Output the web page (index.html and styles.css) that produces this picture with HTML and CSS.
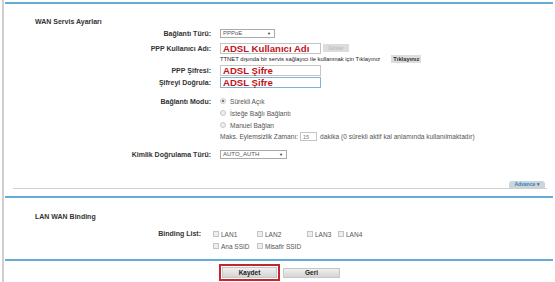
FILE: index.html
```html
<!DOCTYPE html>
<html>
<head lang="tr">
    <meta charset="UTF-8">
    <title>WAN</title>
    <link rel="stylesheet" href="styles.css">
</head>
<body>
<div class="frame">
    <div class="section wan">
        <div class="title">WAN Servis Ayarları</div>

        <div class="row">
            <div class="label">Bağlantı Türü:</div>
            <div class="value"><span class="select sel-type">PPPoE<i>&#9660;</i></span></div>
        </div>
        <div class="row r-user">
            <div class="label">PPP Kullanıcı Adı:</div>
            <div class="value">
                <span class="input big">ADSL Kullanıcı Adı</span>
                <span class="btn-off">Göster</span>
            </div>
        </div>
        <div class="row r-note">
            <div class="label"></div>
            <div class="value note">TTNET dışında bir servis sağlayıcı ile kullanmak için Tıklayınız <span class="btn-small">Tıklayınız</span></div>
        </div>
        <div class="row r-pass">
            <div class="label">PPP Şifresi:</div>
            <div class="value"><span class="input big">ADSL Şifre</span></div>
        </div>
        <div class="row r-pass">
            <div class="label">Şifreyi Doğrula:</div>
            <div class="value"><span class="input big focus">ADSL Şifre</span></div>
        </div>

        <div class="row r-mode">
            <div class="label">Bağlantı Modu:</div>
            <div class="value"><span class="radio on"></span>Sürekli Açık</div>
        </div>
        <div class="row r-mode">
            <div class="label"></div>
            <div class="value"><span class="radio"></span>İsteğe Bağlı Bağlantı</div>
        </div>
        <div class="row r-mode">
            <div class="label"></div>
            <div class="value"><span class="radio"></span>Manuel Bağlan</div>
        </div>
        <div class="row r-idle">
            <div class="label"></div>
            <div class="value">Maks. Eylemsizlik Zamanı: <span class="input tiny">15</span> dakika (0 sürekli aktif kal anlamında kullanılmaktadır)</div>
        </div>

        <div class="row r-auth">
            <div class="label">Kimlik Doğrulama Türü:</div>
            <div class="value"><span class="select sel-auth">AUTO_AUTH<i>&#9660;</i></span></div>
        </div>

        <div class="adv-bar"><span class="adv">Advance <i>&#9662;</i></span></div>
    </div>

    <div class="section lan">
        <div class="title">LAN WAN Binding</div>
        <div class="bind">
            <div class="label">Binding List:</div>
            <div class="checks">
                <span class="chk"><b></b>LAN1</span>
                <span class="chk"><b></b>LAN2</span>
                <span class="chk"><b></b>LAN3</span>
                <span class="chk"><b></b>LAN4</span>
                <span class="chk"><b></b>Ana SSID</span>
                <span class="chk"><b></b>Misafir SSID</span>
            </div>
        </div>
    </div>

    <div class="section actions">
        <span class="hl"><span class="btn save">Kaydet</span></span>
        <span class="btn back">Geri</span>
    </div>
</div>
</body>
</html>
```

FILE: styles.css
```css
body {
    margin: 0;
    background: #fff;
    font-family: "Liberation Sans", Arial, sans-serif;
    color: #555;
}

.frame {
    margin-left: 2px;
    border-left: 2px solid #cfcfcf;
    padding: 2px 2px 0 1px;
    height: 280px;
}

.section {
    border-top: 2px solid #63acd6;
}

.title {
    font-size: 7px;
    font-weight: bold;
    color: #333;
    line-height: 10px;
    padding-left: 30px;
}

.wan .title {
    margin-top: 13px;
    margin-bottom: 1px;
}

.row {
    display: grid;
    grid-template-columns: 206px auto;
    column-gap: 9px;
    align-items: center;
    height: 10px;
}

.label {
    text-align: right;
    font-size: 7px;
    font-weight: bold;
    color: #333;
    white-space: nowrap;
}

.value {
    display: flex;
    align-items: center;
    font-size: 6.6px;
    color: #555;
    white-space: nowrap;
}

.r-user {
    margin-top: 4px;
    height: 12px;
}

.r-pass {
    margin-top: 1px;
    height: 11px;
}

.r-mode {
    height: 12px;
}

.r-mode:nth-child(7) {
    margin-top: 7px;
}

.r-idle {
    height: 11px;
}

.r-auth {
    margin-top: 7px;
}

.select {
    box-sizing: border-box;
    display: flex;
    align-items: center;
    justify-content: space-between;
    height: 9px;
    padding: 0 3px 0 2px;
    border: 1px solid #aaa;
    background: #fff;
    font-size: 6px;
    color: #555;
}

.select i {
    font-style: normal;
    font-size: 4px;
    color: #333;
}

.sel-type {
    width: 55px;
}

.sel-auth {
    width: 67px;
}

.input {
    box-sizing: border-box;
    display: inline-flex;
    align-items: center;
    border: 1px solid #c4c4c4;
    background: #fff;
}

.input.big {
    width: 101px;
    height: 11px;
    padding-left: 2px;
    font-size: 9.6px;
    font-weight: bold;
    color: #c0121c;
}

.input.focus {
    border-color: #7fb2d8;
}

.input.tiny {
    width: 17px;
    height: 9px;
    padding-left: 2px;
    margin: 0 3px 0 2px;
    font-size: 5.5px;
    color: #777;
}

.btn-off {
    margin-left: 2px;
    height: 8px;
    width: 26px;
    background: #dcdcdc;
    color: #b4b4b4;
    font-size: 5px;
    line-height: 8px;
    text-align: center;
}

.note {
    font-size: 5.8px;
    color: #222;
}

.btn-small {
    margin-left: 11px;
    padding: 0 2px;
    width: 30px;
    box-sizing: border-box;
    height: 8px;
    line-height: 8px;
    background: #dedede;
    font-weight: bold;
    font-size: 5.8px;
    color: #333;
}

.radio {
    box-sizing: border-box;
    width: 6px;
    height: 6px;
    margin-right: 4px;
    border: 1px solid #c8c8c8;
    border-radius: 50%;
    background: #eee;
}

.radio.on {
    background: radial-gradient(circle, #777 0 1.3px, #f2f2f2 1.6px);
}

.adv-bar {
    display: flex;
    justify-content: flex-end;
    margin: 22px 6px 7px 8px;
    padding-right: 2px;
    border-bottom: 1px solid #cfcfcf;
}

.adv {
    height: 7px;
    width: 36px;
    border-radius: 3px 3px 0 0;
    background: #c9d6de;
    color: #3b7fb3;
    font-size: 5px;
    font-weight: bold;
    line-height: 7px;
    text-align: center;
}

.adv i {
    font-style: normal;
    color: #666;
}

.lan .title {
    margin-top: 14px;
}

.bind {
    display: grid;
    grid-template-columns: 196px auto;
    column-gap: 12px;
    margin-top: 6px;
    margin-bottom: 7px;
}

.bind .label {
    line-height: 12px;
}

.checks {
    display: grid;
    grid-template-columns: 44px 50px 31px auto;
    grid-auto-rows: 12px;
    align-items: center;
    font-size: 6.5px;
    color: #555;
}

.chk {
    display: flex;
    align-items: center;
    white-space: nowrap;
}

.chk b {
    box-sizing: border-box;
    width: 6px;
    height: 6px;
    margin-right: 2px;
    border: 1px solid #c4c4c4;
    background: #eee;
}

.actions {
    display: flex;
    align-items: center;
    padding: 3px 0 0 214px;
}

.hl {
    display: flex;
    padding: 1px;
    border: 2px solid #c0282d;
}

.btn {
    box-sizing: border-box;
    height: 11px;
    width: 55px;
    border: 1px solid #c8c8c8;
    background: linear-gradient(#f0f0f0, #d4d4d4);
    color: #222;
    font-size: 6.5px;
    font-weight: bold;
    line-height: 9px;
    text-align: center;
}

.btn.back {
    margin-left: 3px;
    width: 57px;
    height: 10px;
    line-height: 8px;
}
```
